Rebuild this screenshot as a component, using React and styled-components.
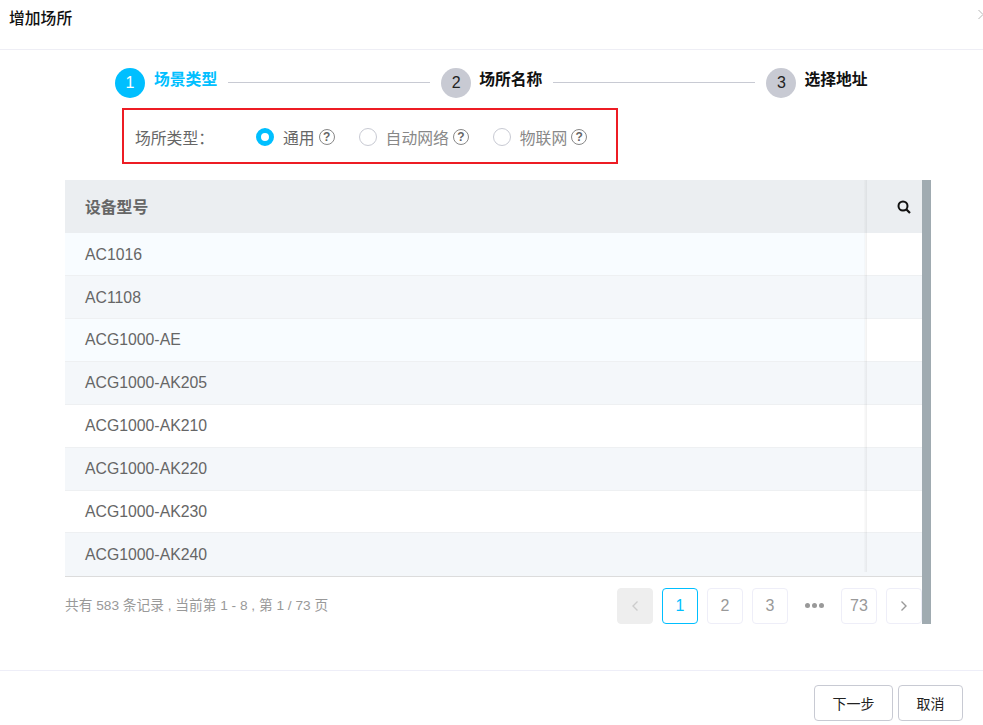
import React from "react";
import styled, { createGlobalStyle } from "styled-components";

const GlobalStyle = createGlobalStyle`
  html, body {
    margin: 0;
    padding: 0;
    background: #fff;
  }
  body {
    font-family: "Liberation Sans", "Noto Sans CJK SC", sans-serif;
    font-size: 14px;
    color: #666;
    overflow: hidden;
  }
`;

const Dialog = styled.div`
  position: relative;
  width: 983px;
  height: 725px;
  overflow: hidden;
  background: #fff;
`;

const Header = styled.div`
  border-bottom: 1px solid #eeeef5;
  padding: 7px 0 0 9px;
  height: 42px;
`;

const Title = styled.div`
  font-size: 15.8px;
  font-weight: 500;
  line-height: 23px;
  color: #111;
`;

const CloseMark = styled.svg`
  position: absolute;
  top: 9px;
  right: -1px;
  width: 6px;
  height: 11px;
`;

const Steps = styled.div`
  display: flex;
  align-items: flex-start;
  padding: 18px 0 0 115px;
  height: 40px;
`;

const StepCircle = styled.div`
  flex: none;
  width: 30px;
  height: 30px;
  border-radius: 50%;
  display: flex;
  align-items: center;
  justify-content: center;
  font-size: 16px;
  color: ${(p) => (p.$active ? "#fff" : "#222")};
  background: ${(p) => (p.$active ? "#00bfff" : "#c8cad3")};
`;

const StepLabel = styled.div`
  margin-left: ${(p) => (p.$active ? 9 : 8)}px;
  padding-top: 1px;
  font-size: 15.8px;
  font-weight: 700;
  line-height: 22px;
  white-space: nowrap;
  color: ${(p) => (p.$active ? "#00bfff" : "#111")};
`;

const StepLine = styled.div`
  flex: none;
  width: 202px;
  height: 1px;
  margin: 14px 11px 0 11px;
  background: #c8cad3;
`;

const TypeBox = styled.div`
  box-sizing: border-box;
  width: 496px;
  height: 56px;
  margin-left: 122px;
  padding: 2px 0 0 11px;
  border: 2px solid #ed1c24;
  display: flex;
  align-items: center;
`;

const TypeLabel = styled.div`
  width: 121px;
  font-size: 15.8px;
  white-space: nowrap;
  color: #666;
`;

const RadioItem = styled.div`
  display: flex;
  align-items: center;
  margin-right: 24px;
`;

const RadioDot = styled.span`
  box-sizing: border-box;
  width: 18px;
  height: 18px;
  border-radius: 50%;
  background: #fff;
  border: ${(p) => (p.$checked ? "5px solid #00bfff" : "1px solid #c8cad3")};
  margin-right: 9px;
`;

const RadioText = styled.span`
  font-size: 15.8px;
  color: ${(p) => (p.$checked ? "#666" : "#888")};
`;

const HelpIcon = styled.span`
  box-sizing: border-box;
  width: 16px;
  height: 16px;
  margin-left: 4px;
  border: 1px solid #888;
  border-radius: 50%;
  display: flex;
  align-items: center;
  justify-content: center;
  font-size: 12px;
  font-weight: 700;
  color: #666;
`;

const Content = styled.div`
  display: flex;
  margin: 16px 0 0 65px;
  height: 444px;
`;

const TableColumn = styled.div`
  width: 857px;
`;

const Scrollbar = styled.div`
  width: 9px;
  background: #a0abb1;
`;

const Table = styled.div`
  position: relative;
  border-bottom: 1px solid #dcdcdc;
`;

const HeadRow = styled.div`
  display: flex;
  height: 53.3px;
  align-items: center;
  background: #ebeef1;
  padding-left: 20px;
  justify-content: space-between;
  font-size: 15.8px;
  font-weight: 700;
  color: #666;
`;

const SearchButton = styled.svg`
  width: 16px;
  height: 16px;
  margin-right: 10px;
`;

const Row = styled.div`
  display: flex;
  box-sizing: border-box;
  height: 42.875px;
  border-bottom: 1px solid ${(p) => (p.$last ? "transparent" : "#eef0f2")};
  background: ${(p) => (p.$alt ? "#f4f7fa" : "#fff")};
`;

const NameCell = styled.div`
  width: 800px;
  padding: 1px 0 0 20px;
  box-sizing: border-box;
  display: flex;
  align-items: center;
  font-size: 15.8px;
  color: #666;
  background: ${(p) => (p.$tint ? "#f8fcff" : "transparent")};
`;

const FixedShadow = styled.div`
  position: absolute;
  top: 0;
  bottom: 4px;
  left: 799px;
  width: 3px;
  background: linear-gradient(to right, rgba(0, 0, 0, 0.01), rgba(0, 0, 0, 0.06));
`;

const PagerRow = styled.div`
  display: flex;
  align-items: center;
  justify-content: space-between;
  margin-top: 10.7px;
`;

const Summary = styled.div`
  margin-top: -4px;
  font-size: 13.7px;
  color: #999;
`;

const Pager = styled.div`
  display: flex;
  gap: 9px;
`;

const PageButton = styled.div`
  box-sizing: border-box;
  width: 36px;
  height: 36px;
  border-radius: 4px;
  display: flex;
  align-items: center;
  justify-content: center;
  font-size: 16px;
  border: 1px solid ${(p) => (p.$current ? "#00bfff" : p.$disabled ? "#eee" : "#eeeef8")};
  background: ${(p) => (p.$disabled ? "#eee" : "#fff")};
  color: ${(p) => (p.$current ? "#00bfff" : "#999")};
`;

const PageDots = styled.div`
  width: 35px;
  display: flex;
  align-items: center;
  justify-content: center;
  gap: 2px;
`;

const Dot = styled.span`
  width: 5px;
  height: 5px;
  border-radius: 50%;
  background: #999;
`;

const Footer = styled.div`
  margin-top: 46px;
  border-top: 1px solid #eeeef8;
  display: flex;
  justify-content: flex-end;
  gap: 5px;
  padding: 14px 20px 0 0;
`;

const FooterButton = styled.div`
  box-sizing: border-box;
  width: ${(p) => p.$width}px;
  height: 36px;
  border: 1px solid #c8cad3;
  border-radius: 4px;
  display: flex;
  align-items: center;
  justify-content: center;
  font-size: 14px;
  color: #222;
  background: #fff;
`;

const steps = ["场景类型", "场所名称", "选择地址"];
const radios = ["通用", "自动网络", "物联网"];
const rows = [
  { name: "AC1016", tint: true },
  { name: "AC1108", alt: true },
  { name: "ACG1000-AE", tint: true },
  { name: "ACG1000-AK205", alt: true },
  { name: "ACG1000-AK210" },
  { name: "ACG1000-AK220", alt: true },
  { name: "ACG1000-AK230" },
  { name: "ACG1000-AK240", alt: true },
];

const Chevron = ({ dir, color }) => (
  <svg width="8" height="12" viewBox="0 0 8 12" fill="none">
    <path
      d={dir === "left" ? "M6.5 1.5 L2 6 L6.5 10.5" : "M1.5 1.5 L6 6 L1.5 10.5"}
      stroke={color}
      strokeWidth="1.4"
    />
  </svg>
);

export default function App() {
  return (
    <Dialog>
      <GlobalStyle />
      <Header>
        <Title>增加场所</Title>
      </Header>
      <CloseMark viewBox="0 0 6 11" fill="none">
        <path d="M0.5 1 L5 5.5 L0.5 10" stroke="#b5b5b5" strokeWidth="1" />
      </CloseMark>

      <Steps>
        {steps.map((label, i) => (
          <React.Fragment key={label}>
            <StepCircle $active={i === 0}>{i + 1}</StepCircle>
            <StepLabel $active={i === 0}>{label}</StepLabel>
            {i < 2 && <StepLine />}
          </React.Fragment>
        ))}
      </Steps>

      <TypeBox>
        <TypeLabel>场所类型：</TypeLabel>
        {radios.map((label, i) => (
          <RadioItem key={label}>
            <RadioDot $checked={i === 0} />
            <RadioText $checked={i === 0}>{label}</RadioText>
            <HelpIcon>?</HelpIcon>
          </RadioItem>
        ))}
      </TypeBox>

      <Content>
        <TableColumn>
          <Table>
            <HeadRow>
              设备型号
              <SearchButton viewBox="0 0 16 16" fill="none">
                <circle cx="7" cy="7" r="4.5" stroke="#111" strokeWidth="2" />
                <path d="M10.5 10.5 L14 14" stroke="#111" strokeWidth="2.2" />
              </SearchButton>
            </HeadRow>
            {rows.map((row, i) => (
              <Row key={row.name} $alt={row.alt} $last={i === rows.length - 1}>
                <NameCell $tint={row.tint}>{row.name}</NameCell>
              </Row>
            ))}
            <FixedShadow />
          </Table>
          <PagerRow>
            <Summary>共有 583 条记录 , 当前第 1 - 8 , 第 1 / 73 页</Summary>
            <Pager>
              <PageButton $disabled>
                <Chevron dir="left" color="#ccc" />
              </PageButton>
              <PageButton $current>1</PageButton>
              <PageButton>2</PageButton>
              <PageButton>3</PageButton>
              <PageDots>
                <Dot />
                <Dot />
                <Dot />
              </PageDots>
              <PageButton>73</PageButton>
              <PageButton>
                <Chevron dir="right" color="#999" />
              </PageButton>
            </Pager>
          </PagerRow>
        </TableColumn>
        <Scrollbar />
      </Content>

      <Footer>
        <FooterButton $width={79}>下一步</FooterButton>
        <FooterButton $width={65}>取消</FooterButton>
      </Footer>
    </Dialog>
  );
}
